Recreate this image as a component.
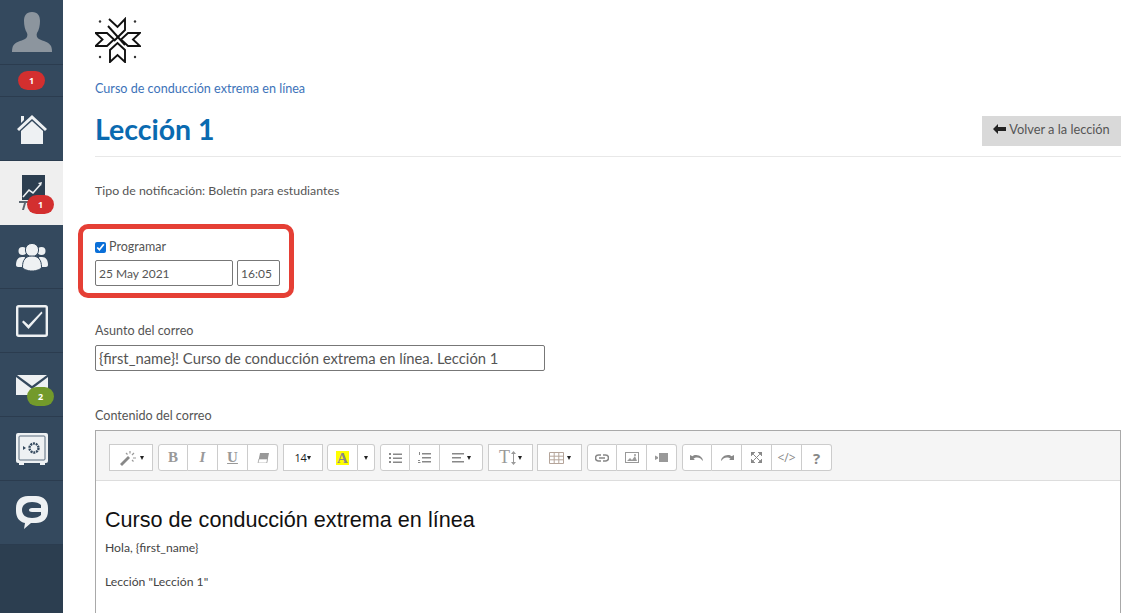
<div class="page">
  <nav class="side">
    <div class="item avatar">
      <svg width="42" height="42" viewBox="0 0 42 42"><path d="M21 1c-6 0-8 4-8 9 0 4 1 9 3 12 1 2 0 5-2 6-4 2-10 3-12 7-1 2-1 5-1 6h40c0-1 0-4-1-6-2-4-8-5-12-7-2-1-3-4-2-6 2-3 3-8 3-12 0-5-2-9-8-9z" fill="#8c959e"/></svg>
    </div>
    <div class="item badgerow"><span class="badge inline red">1</span></div>
    <div class="item">
      <svg width="32" height="32" viewBox="0 0 32 32"><path d="M1 16 16 2l15 14-2 2L16 6 3 18z" fill="#eef1f3"/><path d="M5 3h3v4l-3 3z" fill="#eef1f3"/><path d="M5 18 16 8l11 10v13H5z" fill="#eef1f3"/></svg>
    </div>
    <div class="item active">
      <svg width="26" height="36" viewBox="0 0 26 36"><rect x="3" y="0" width="23" height="25" fill="#2c3e50"/><path d="M4 22l6-7 4 3 7-8" fill="none" stroke="#eef1f3" stroke-width="1.6"/><path d="M19 8l4-1-1 4z" fill="#eef1f3"/><path d="M0 26h22v2H0z" fill="#5b6670"/><path d="M5 28l-2 7h2l2-7zM10 28v7h2v-7z" fill="#5b6670"/></svg>
      <span class="badge red">1</span>
    </div>
    <div class="item">
      <svg width="32" height="28" viewBox="0 0 32 28"><g fill="#eef1f3"><circle cx="6.500" cy="8" r="4"/><circle cx="25.500" cy="8" r="4"/><path d="M0 22c0-5 2-8 6-8h3l-2 10H2c-1 0-2-1-2-2zM32 22c0-5-2-8-6-8h-3l2 10h5c1 0 2-1 2-2z"/></g><circle cx="16" cy="7" r="6.600" fill="#eef1f3" stroke="#34495e"/><path d="M6.500 24c0-7 3-11 9.500-11s9.500 4 9.500 11c0 2-5 4-9.500 4s-9.500-2-9.500-4z" fill="#eef1f3" stroke="#34495e"/></svg>
    </div>
    <div class="item">
      <svg width="32" height="32" viewBox="0 0 32 32"><rect x="1.200" y="1.200" width="29.600" height="29.600" rx="1.500" fill="none" stroke="#eef1f3" stroke-width="2.400"/><path d="M6 17l1.500-1.500 5 4.500L25.500 6.500 26.500 8 12.500 24z" fill="#eef1f3"/></svg>
    </div>
    <div class="item">
      <svg width="32" height="20" viewBox="0 0 32 20"><path d="M1 0h30L16 11z" fill="#eef1f3"/><path d="M0 2v18h32V2L16 14z" fill="#eef1f3"/></svg>
      <span class="badge green">2</span>
    </div>
    <div class="item">
      <svg width="32" height="32" viewBox="0 0 32 32"><rect x="0" y="0" width="32" height="30" rx="2" fill="#eef1f3"/><path d="M3 30h5v2H3zM24 30h5v2h-5z" fill="#eef1f3"/><rect x="3" y="3" width="26" height="24" rx="1" fill="none" stroke="#5b6d7f" stroke-width="1"/><circle cx="18" cy="15" r="4.500" fill="none" stroke="#34495e" stroke-width="2.400" stroke-dasharray="2 .8"/><path d="M7 13l3 2-3 2z" fill="#34495e"/></svg>
    </div>
    <div class="item">
      <svg width="32" height="34" viewBox="0 0 32 34"><path d="M12 0h8c8 0 12 5 12 12v3c0 8-5 12-12 12h-5l-7 6 1-6c-6-1-9-6-9-12v-3C0 5 4 0 12 0z" fill="#eef1f3"/><path d="M25 9c-2-2-5-3-9-3-6 0-10 3-10 8s4 8 10 8c4 0 7-1 9-3v-3h-9c-2 0-3-1-3-2s1-2 3-2h9z" fill="#34495e"/></svg>
    </div>
    <div class="rest"></div>
  </nav>

  <main class="main">
    <div class="logo">
      <svg width="46" height="46" viewBox="0 0 46 46">
        <g fill="none" stroke="#111" stroke-width="1.900" stroke-linejoin="miter">
          <path d="M14 2l8.500 8L30 2v11L19 24"/>
          <path d="M13 9l17 19"/>
          <path d="M0.500 16H12l7 6.500-7 6.500H0.500L7.500 22.500z"/>
          <path d="M45 16H33l-7 6.500 7 6.500h12l-7-6.500z"/>
          <path d="M15 45V33l7.500-7 7.500 7v12l-7.500-7z"/>
        </g>
        <g fill="#333"><circle cx="5" cy="4.500" r="1.200"/><circle cx="40" cy="4.500" r="1.200"/><circle cx="5" cy="40" r="1.200"/><circle cx="40" cy="40" r="1.200"/></g>
      </svg>
    </div>
    <a class="crumb" href="#c">Curso de conducción extrema en línea</a>
    <header class="head">
      <h1>Lección 1</h1>
      <button class="back">
        <svg width="13" height="10" viewBox="0 0 13 10"><path d="M0 5l5-5v3h8v4H5v3z" fill="#222"/></svg>
        Volver a la lección
      </button>
    </header>

    <p class="type">Tipo de notificación: Boletín para estudiantes</p>

    <section class="sched">
      <div class="ring"></div>
      <label class="check"><input type="checkbox" checked /> Programar</label>
      <div class="dates">
        <input class="date" value="25 May 2021" />
        <input class="time" value="16:05" />
      </div>
    </section>

    <label class="lab subject-lab" for="subj">Asunto del correo</label>
    <input id="subj" class="subject" value="&#123;first_name&#125;! Curso de conducción extrema en línea. Lección 1" />

    <div class="lab content-lab">Contenido del correo</div>
    <div class="editor">
      <div class="toolbar">
        <button class="tb w44">
          <svg width="18" height="16" viewBox="0 0 18 16"><path d="M1 14l8-8 2 2-8 8z" fill="#888"/><path d="M11 1v2.500M15 3l-2 2M17 8h-3M7 3l1.500 1.500M13 10l1.500 1.500" stroke="#999" stroke-width="1.200"/></svg>
          <i class="car"></i>
        </button>
        <div class="group">
          <button class="tb w30 serif b">B</button>
          <button class="tb w30 serif it">I</button>
          <button class="tb w30 serif u">U</button>
          <button class="tb w30"><svg width="12" height="10" viewBox="0 0 12 10"><path d="M3 0h9l-2 10H1z" fill="#999"/><path d="M2 6h8.500l-.8 4H1z" fill="#fff" stroke="#999" stroke-width=".6"/></svg></button>
        </div>
        <button class="tb w40 size">14<i class="car"></i></button>
        <div class="group tight">
          <button class="tb w31 serif hl"><span>A</span></button>
          <button class="tb w17"><i class="car"></i></button>
        </div>
        <div class="group">
          <button class="tb w30"><svg width="13" height="10" viewBox="0 0 13 10"><path d="M0 0h2v2H0zM0 4h2v2H0zM0 8h2v2H0zM4 .5h9v1.500H4zM4 4.500h9V6H4zM4 8.500h9V10H4z" fill="#888"/></svg></button>
          <button class="tb w30"><svg width="13" height="11" viewBox="0 0 13 11"><path d="M1 0h1v3H1zM0 8h2v1H0zM0 10h2.500v1H0zM4 1h9v1.500H4zM4 5h9v1.500H4zM4 9h9v1.500H4z" fill="#888"/></svg></button>
          <button class="tb w43"><svg width="12" height="10" viewBox="0 0 12 10"><path d="M0 0h12v1.400H0zM0 4h9v1.400H0zM0 8h12v1.400H0z" fill="#888"/></svg><i class="car"></i></button>
        </div>
        <button class="tb w45 serif ts"><span>T</span><svg width="5" height="14" viewBox="0 0 5 14"><path d="M2.500 0L5 3H3v8h2l-2.500 3L0 11h2V3H0z" fill="#999"/></svg><i class="car"></i></button>
        <button class="tb w45 tight"><svg width="15" height="12" viewBox="0 0 15 12"><path d="M.5.500h14v11H.5zM.5 4.200h14M.5 7.800h14M5.200.5v11M9.800.5v11" fill="none" stroke="#b5a59a"/></svg><i class="car"></i></button>
        <div class="group">
          <button class="tb w30"><svg width="14" height="8" viewBox="0 0 14 8"><path d="M6 1H3.500a3 3 0 0 0 0 6H6M8 1h2.500a3 3 0 0 1 0 6H8M4 4h6" fill="none" stroke="#888" stroke-width="1.500"/></svg></button>
          <button class="tb w30"><svg width="14" height="11" viewBox="0 0 14 11"><rect x=".5" y=".5" width="13" height="10" fill="none" stroke="#999"/><path d="M2 9l3-3 2 2 3-4 2 5z" fill="#999"/><circle cx="10" cy="3" r="1" fill="#999"/></svg></button>
          <button class="tb w30"><svg width="13" height="10" viewBox="0 0 13 10"><path d="M4 0h9v9H4zM0 2.500l3 1.500v1.500L0 7z" fill="#999"/></svg></button>
        </div>
        <div class="group">
          <button class="tb w30"><svg width="14" height="7" viewBox="0 0 14 7"><path d="M0 1v5h5L3.500 4.800C5 3.500 8 3 10.500 4.500L13 7c0-3-3-6-7-6-1.500 0-2.700.4-3.500 1.200z" fill="#888"/></svg></button>
          <button class="tb w30"><svg width="14" height="7" viewBox="0 0 14 7"><path d="M14 1v5H9l1.500-1.200C9 3.500 6 3 3.500 4.500L1 7c0-3 3-6 7-6 1.500 0 2.700.4 3.500 1.200z" fill="#888"/></svg></button>
          <button class="tb w30"><svg width="11" height="11" viewBox="0 0 10 10"><path d="M0 0h3.500L0 3.500zM10 0v3.500L6.500 0zM0 10V6.500L3.500 10zM10 10H6.500L10 6.500zM2 2l6 6M8 2L2 8" fill="#888" stroke="#888" stroke-width=".9"/></svg></button>
          <button class="tb w30 code">&lt;/&gt;</button>
          <button class="tb w30 q">?</button>
        </div>
      </div>
      <div class="body">
        <h2>Curso de conducción extrema en línea</h2>
        <p>Hola, &#123;first_name&#125;</p>
        <p class="lesson">Lección "Lección 1"</p>
      </div>
    </div>
  </main>
</div>

<style>
  :global(body) { margin: 0; background: #fff; overflow: hidden; }
  .page { display: flex; height: 613px; overflow: hidden; font-family: Lato, "Open Sans", sans-serif; color: #555; font-size: 12.5px; }
  .side { width: 63px; flex: none; display: flex; flex-direction: column; background: #34495e; }
  .item { height: 63px; flex: none; border-bottom: 1px solid #2b3c4f; display: flex; align-items: center; justify-content: center; position: relative; }
  .avatar { height: 64px; }
  .badgerow { height: 31px; }
  .active { background: #efefef; border-bottom-color: #efefef; }
  .rest { flex: 1; background: #2c3e50; }
  .badge { position: absolute; left: 27px; top: 34px; width: 27px; height: 19px; border-radius: 10px; color: #fff; font: bold 9px/19px "Open Sans", sans-serif; text-align: center; }
  .badge.inline { left: 18px; top: 6px; }
  .red { background: #d32f2f; }
  .green { background: #739a2b; }

  .main { flex: 1; min-width: 0; padding: 0 27px 0 32px; }
  .logo { box-sizing: border-box; height: 81px; padding-top: 17px; }
  .crumb { display: block; color: #3d73b9; text-decoration: none; line-height: 16px; font-size: 12.6px; }
  .head { display: flex; justify-content: space-between; align-items: flex-start; border-bottom: 1px solid #e8e8e8; height: 60px; box-sizing: border-box; }
  h1 { margin: 14px 0 0; color: #0a6ab0; font-size: 28.5px; font-weight: 700; line-height: 36px; }
  .back { border: 0; background: #d9d9d9; width: 139px; height: 30px; margin-top: 19px; padding: 0 0 4px; font: 12.8px Lato, sans-serif; color: #555; display: flex; align-items: center; justify-content: center; gap: 3px; }
  .type { margin: 26px 0 0; line-height: 16px; font-size: 12.35px; }
  .sched { position: relative; margin-top: 40px; }
  .ring { position: absolute; left: -17px; top: -15px; width: 216px; height: 74px; box-sizing: border-box; border: 5px solid #e53f35; border-radius: 10px; pointer-events: none; }
  .check { display: flex; align-items: center; gap: 3px; height: 16px; line-height: 16px; }
  .check input { margin: 0; width: 11px; height: 11px; accent-color: #0a6fd8; }
  .dates { display: flex; gap: 4px; margin-top: 5px; }
  input { font-family: inherit; color: #555; box-sizing: border-box; border: 1px solid #777; border-radius: 2px; padding: 0 3px; outline: none; background: #fff; }
  .date { width: 138px; height: 26px; font-size: 12px; }
  .time { width: 43px; height: 26px; font-size: 12px; }
  .lab { display: block; line-height: 16px; font-size: 12.6px; }
  .subject-lab { margin-top: 37px; }
  .subject { display: block; width: 450px; height: 26px; margin-top: 6px; font-size: 14.8px; }
  .content-lab { margin-top: 37px; }
  .editor { margin-top: 6px; border: 1px solid #a9a9a9; border-bottom: 0; height: 300px; }
  .toolbar { height: 50px; box-sizing: border-box; background: #f5f5f5; border-bottom: 1px solid #ddd; padding: 13px 0 0 13px; display: flex; gap: 5px; align-items: flex-start; }
  .group { display: flex; }
  .tight { margin-left: -1px; }
  .tb { height: 27px; box-sizing: border-box; background: #fff; border: 1px solid #ccc; border-left-width: 0; padding: 0; display: flex; align-items: center; justify-content: center; gap: 3px; color: #999; flex: none; }
  .toolbar > .tb { border-left-width: 1px; }
  .group .tb:first-child { border-left-width: 1px; border-top-left-radius: 3px; border-bottom-left-radius: 3px; }
  .group .tb:last-child { border-top-right-radius: 3px; border-bottom-right-radius: 3px; }
  .w30 { width: 30px; }
  .w31 { width: 31px; } .w17 { width: 17px; } .w40 { width: 40px; } .w43 { width: 43px; } .w44 { width: 44px; } .w45 { width: 45px; }
  .car { display: inline-block; width: 0; height: 0; border-left: 2.500px solid transparent; border-right: 2.500px solid transparent; border-top: 4px solid #222; }
  .serif { font-family: "Liberation Serif", serif; font-size: 15px; font-weight: 700; }
  .it { font-style: italic; }
  .u { text-decoration: underline; }
  .size { color: #222; font: 11px "Open Sans", sans-serif; gap: 1px; letter-spacing: -.4px; }
  .hl span { background: #ff0; line-height: 14px; padding: 0 1px; color: #888; }
  .ts { font-size: 18px; font-weight: 400; gap: 1px; }
  .ts .car { margin-left: 1px; }
  .code { font: 12px "Open Sans", sans-serif; color: #888; }
  .q { font: bold 15px "Open Sans", sans-serif; color: #888; }
  .body { padding: 27px 9px 0; color: #444; font-size: 12.2px; }
  h2 { margin: 0; font: 400 21.6px/24px "Liberation Sans", sans-serif; color: #111; }
  .body p { margin: 8px 0 0; line-height: 16px; }
  .body .lesson { margin-top: 18px; }
</style>
